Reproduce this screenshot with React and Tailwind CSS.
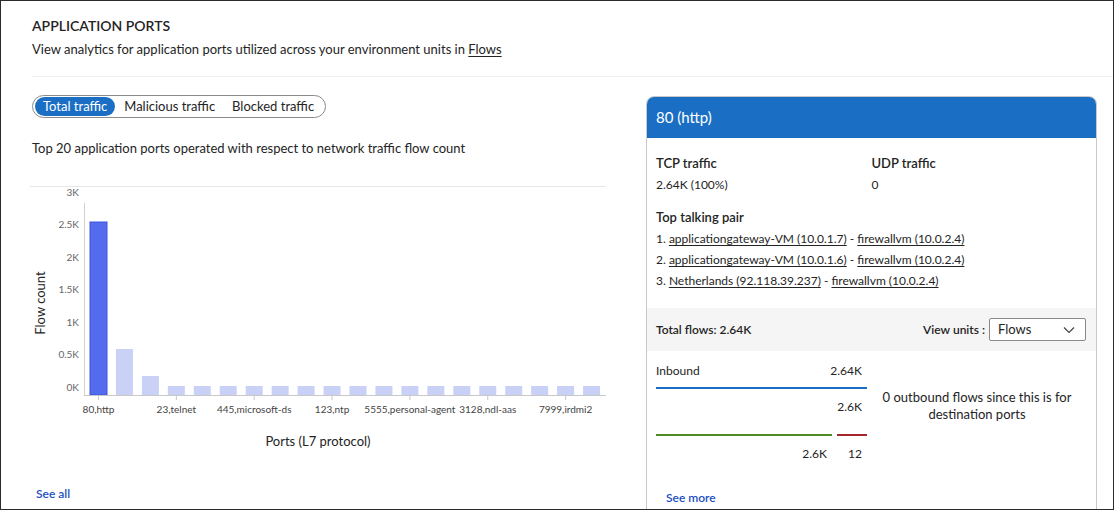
import React from 'react';

const font = { fontFamily: 'Lato, "Noto Sans", sans-serif' };

const barHeights = [173, 46, 19, 9, 9, 9, 9, 9, 9, 9, 9, 9, 9, 9, 9, 9, 9, 9, 9, 9];
const xLabels = ['80,http', '23,telnet', '445,microsoft-ds', '123,ntp', '5555,personal-agent', '3128,ndl-aas', '7999,irdmi2'];
const yTicks = [
  { label: '3K', y: 14 },
  { label: '2.5K', y: 46 },
  { label: '2K', y: 79 },
  { label: '1.5K', y: 111 },
  { label: '1K', y: 144 },
  { label: '0.5K', y: 176 },
  { label: '0K', y: 209 },
];

const pairs = [
  ['applicationgateway-VM (10.0.1.7)', 'firewallvm (10.0.2.4)'],
  ['applicationgateway-VM (10.0.1.6)', 'firewallvm (10.0.2.4)'],
  ['Netherlands (92.118.39.237)', 'firewallvm (10.0.2.4)'],
];

const PortsChart = () => {
  const base = 216;
  const pitch = 25.95;
  return (
    <svg width="580" height="290" className="block -ml-[2px]">
      <line x1="0" y1="7.5" x2="576" y2="7.5" stroke="#e6e6e6" />
      <line x1="54.5" y1="24" x2="54.5" y2={base} stroke="#d0d0d0" />
      {yTicks.map((t) => (
        <text key={t.label} x="49" y={t.y} textAnchor="end" dominantBaseline="middle" fontSize="10" fill="#666">
          {t.label}
        </text>
      ))}
      {barHeights.map((h, i) => (
        <rect
          key={i}
          x={60 + i * pitch}
          y={base - h}
          width="17"
          height={h}
          fill={i === 0 ? '#536bec' : '#c9d1f7'}
          stroke={i === 0 ? '#3b55dc' : 'none'}
          strokeWidth="1"
        />
      ))}
      <line x1="54" y1={base + 0.5} x2="576" y2={base + 0.5} stroke="#c8c8c8" />
      {xLabels.map((l, k) => {
        const cx = 68.5 + k * 3 * pitch;
        return (
          <g key={l}>
            <line x1={cx} y1={base} x2={cx} y2={base + 5} stroke="#c8c8c8" />
            <text x={cx} y="231" textAnchor="middle" dominantBaseline="middle" fontSize="10" fill="#444">
              {l}
            </text>
          </g>
        );
      })}
      <text x="12" y="124" transform="rotate(-90 12 124)" textAnchor="middle" dominantBaseline="middle" fontSize="13" fill="#242424">
        Flow count
      </text>
      <text x="288" y="264" textAnchor="middle" dominantBaseline="middle" fontSize="13" fill="#242424">
        Ports (L7 protocol)
      </text>
    </svg>
  );
};

const Link = ({ children }) => <span className="underline underline-offset-2">{children}</span>;

export default function App() {
  return (
    <div style={font} className="w-[1114px] h-[510px] overflow-hidden bg-white border border-[#2b2b2b] text-[#242424]">
      <div className="pl-[31px] pt-[15px]">
        <h1 className="text-[14px] leading-[20px] font-semibold">APPLICATION PORTS</h1>
        <p className="text-[13px] leading-[20px] mt-[3px]">
          View analytics for application ports utilized across your environment units in <Link>Flows</Link>
        </p>
        <div className="mt-[17px] border-b border-[#f0f0f0]" />
      </div>

      <div className="flex">
        <div className="ml-[31px] w-[577px] pt-[16px]">
          <div className="inline-flex items-center h-[23px] border border-[#8a8a8a] rounded-full px-[2px] text-[13px]">
            <span className="bg-[#1a6fc4] text-white rounded-full px-[8px] h-[19px] leading-[19px]">Total traffic</span>
            <span className="px-[9px]">Malicious traffic</span>
            <span className="pl-[8px] pr-[9px]">Blocked traffic</span>
          </div>
          <p className="text-[13px] leading-[20px] mt-[20px]">
            Top 20 application ports operated with respect to network traffic flow count
          </p>
          <div className="mt-[21px]">
            <PortsChart />
          </div>
          <div className="mt-[16px] ml-[4px] text-[12px] font-semibold text-[#1b4fc2]">See all</div>
        </div>

        <div className="ml-[37px] mt-[19px] w-[451px] border border-[#c8c8c8] rounded-t-[8px] overflow-hidden h-[430px]">
          <div className="bg-[#1a6fc4] text-white text-[15px] h-[41px] flex items-center px-[9px]">80 (http)</div>
          <div className="px-[9px] pt-[15px]">
            <div className="grid grid-cols-2">
              <div>
                <div className="text-[13px] leading-[20px] font-semibold">TCP traffic</div>
                <div className="text-[12px] leading-[20px] mt-[2px]">2.64K (100%)</div>
              </div>
              <div>
                <div className="text-[13px] leading-[20px] font-semibold">UDP traffic</div>
                <div className="text-[12px] leading-[20px] mt-[2px]">0</div>
              </div>
            </div>
            <div className="text-[13px] leading-[20px] font-semibold mt-[12px]">Top talking pair</div>
            <div className="text-[12px] mt-[1px]">
              {pairs.map(([a, b], i) => (
                <div key={i} className="leading-[21px]">
                  {i + 1}. <Link>{a}</Link> - <Link>{b}</Link>
                </div>
              ))}
            </div>
          </div>
          <div className="mt-[17px] bg-[#f5f5f5] h-[43px] flex items-center justify-between px-[9px] pr-[10px]">
            <span className="text-[12px] font-semibold">Total flows: 2.64K</span>
            <div className="flex items-center gap-[4px]">
              <span className="text-[12px] font-semibold">View units :</span>
              <div className="w-[97px] h-[23px] bg-white border border-[#8a8a8a] rounded-[2px] flex items-center justify-between pl-[8px] pr-[10px] text-[13px]">
                <span>Flows</span>
                <svg width="12" height="8" viewBox="0 0 12 8">
                  <path d="M1 1.5l5 5 5-5" fill="none" stroke="#444" strokeWidth="1.2" />
                </svg>
              </div>
            </div>
          </div>
          <div className="flex px-[9px] pt-[10px]">
            <div className="w-[211px] text-[12px]">
              <div className="flex justify-between leading-[20px] pr-[5px]">
                <span>Inbound</span>
                <span>2.64K</span>
              </div>
              <div className="mt-[6px] h-[2px] bg-[#1a6fc4]" />
              <div className="text-right leading-[20px] mt-[8px] pr-[5px]">2.6K</div>
              <div className="mt-[17px] flex gap-[5px]">
                <div className="w-[176px] h-[2px] bg-[#4e8a1f]" />
                <div className="flex-1 h-[2px] bg-[#a4262c]" />
              </div>
              <div className="flex leading-[20px] mt-[8px]">
                <span className="w-[176px] text-right pr-[5px]">2.6K</span>
                <span className="flex-1 text-right pr-[5px]">12</span>
              </div>
            </div>
            <div className="flex-1 text-center text-[13px] leading-[17px] pt-[28px]">
              0 outbound flows since this is for
              <br />
              destination ports
            </div>
          </div>
          <div className="mt-[25px] ml-[19px] text-[12px] font-semibold text-[#1b4fc2]">See more</div>
        </div>
      </div>
    </div>
  );
}
